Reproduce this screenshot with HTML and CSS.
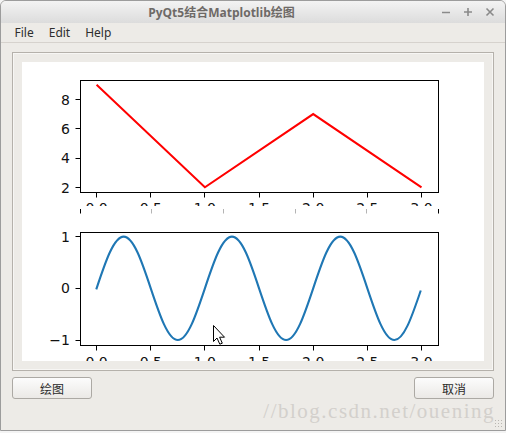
FILE: index.html
```html
<!DOCTYPE html>
<html lang="zh">

<head>
    <meta charset="UTF-8">
    <title>PyQt5结合Matplotlib绘图</title>
    <link rel="stylesheet" href="styles.css">
</head>

<body>

    <div class="ventana">
        <div class="barra-titulo">
            <div class="titulo">PyQt5结合Matplotlib绘图</div>
            <div class="controles">
                <span class="control">
                    <svg width="10" height="10" viewBox="0 0 10 10"><path d="M1 5.5H9" stroke="#8a8a8a" stroke-width="1.6"/></svg>
                </span>
                <span class="control">
                    <svg width="10" height="10" viewBox="0 0 10 10"><path d="M1 5H9M5 1V9" stroke="#8a8a8a" stroke-width="1.6"/></svg>
                </span>
                <span class="control">
                    <svg width="10" height="10" viewBox="0 0 10 10"><path d="M1.5 1.5L8.5 8.5M8.5 1.5L1.5 8.5" stroke="#8a8a8a" stroke-width="1.6"/></svg>
                </span>
            </div>
        </div>

        <div class="menu">
            <span class="menu-item">File</span>
            <span class="menu-item">Edit</span>
            <span class="menu-item">Help</span>
        </div>

        <div class="contenido">
            <div class="marco">
                <svg class="lienzo" width="462" height="299" viewBox="0 0 462 299">
                    <defs>
                        <clipPath id="recorte-etiquetas">
                            <rect x="0" y="131" width="462" height="13"/>
                        </clipPath>
                    </defs>

                    <!-- grafico de arriba -->
                    <polyline points="74.6,22.75 182.9,125.3 291.2,52.05 399.5,125.3" fill="none" stroke="#ff0000" stroke-width="2" stroke-linejoin="miter"/>
                    <rect x="58.5" y="18.5" width="358" height="112" fill="none" stroke="#000" stroke-width="1"/>
                    <g stroke="#000" stroke-width="1">
                        <path d="M53.5 37.5H58.5M53.5 66.5H58.5M53.5 96.5H58.5M53.5 125.5H58.5"/>
                        <path d="M74.5 130.5V135.5M128.5 130.5V135.5M182.5 130.5V135.5M237.5 130.5V135.5M291.5 130.5V135.5M345.5 130.5V135.5M399.5 130.5V135.5"/>
                    </g>
                    <g class="etiqueta" text-anchor="end">
                        <text x="48" y="42.5">8</text>
                        <text x="48" y="71.5">6</text>
                        <text x="48" y="101">4</text>
                        <text x="48" y="130.5">2</text>
                    </g>
                    <g class="etiqueta" text-anchor="middle" clip-path="url(#recorte-etiquetas)">
                        <text x="74.6" y="150.5">0.0</text>
                        <text x="128.8" y="150.5">0.5</text>
                        <text x="182.9" y="150.5">1.0</text>
                        <text x="237.1" y="150.5">1.5</text>
                        <text x="291.2" y="150.5">2.0</text>
                        <text x="345.4" y="150.5">2.5</text>
                        <text x="399.5" y="150.5">3.0</text>
                    </g>
                    <g stroke-width="1">
                        <path d="M58.5 147V151.5M416.5 147V151.5" stroke="#000"/>
                        <path d="M129.5 147V151.5M201.5 147V151.5M273.5 147V151.5M344.5 147V151.5" stroke="#b4b4b4"/>
                    </g>

                    <!-- grafico de abajo -->
                    <path d="M74.6 226.3
                             c 8.83 -26.49 17.28 -51.7 27.075 -51.7 c 9.795 0 18.245 25.21 27.075 51.7
                             c 8.83 26.49 17.28 51.7 27.075 51.7 c 9.795 0 18.245 -25.21 27.075 -51.7
                             c 8.83 -26.49 17.28 -51.7 27.075 -51.7 c 9.795 0 18.245 25.21 27.075 51.7
                             c 8.83 26.49 17.28 51.7 27.075 51.7 c 9.795 0 18.245 -25.21 27.075 -51.7
                             c 8.83 -26.49 17.28 -51.7 27.075 -51.7 c 9.795 0 18.245 25.21 27.075 51.7
                             c 8.83 26.49 17.28 51.7 27.075 51.7 c 9.795 0 18 -25.21 26 -48.5"
                          fill="none" stroke="#1f77b4" stroke-width="2.1" stroke-linecap="square"/>
                    <rect x="58.5" y="170.5" width="358" height="113" fill="none" stroke="#000" stroke-width="1"/>
                    <g stroke="#000" stroke-width="1">
                        <path d="M53.5 174.5H58.5M53.5 226.5H58.5M53.5 278.5H58.5"/>
                        <path d="M74.5 283.5V288.5M128.5 283.5V288.5M182.5 283.5V288.5M237.5 283.5V288.5M291.5 283.5V288.5M345.5 283.5V288.5M399.5 283.5V288.5"/>
                    </g>
                    <g class="etiqueta" text-anchor="end">
                        <text x="48" y="179.8">1</text>
                        <text x="48" y="231.4">0</text>
                        <text x="48" y="283.1">−1</text>
                    </g>
                    <g class="etiqueta" text-anchor="middle">
                        <text x="74.6" y="304.5">0.0</text>
                        <text x="128.8" y="304.5">0.5</text>
                        <text x="182.9" y="304.5">1.0</text>
                        <text x="237.1" y="304.5">1.5</text>
                        <text x="291.2" y="304.5">2.0</text>
                        <text x="345.4" y="304.5">2.5</text>
                        <text x="399.5" y="304.5">3.0</text>
                    </g>

                    <!-- puntero del raton -->
                    <path d="M191.5 263.5V279.5L195 276L197.8 282.2L200.3 281.2L197.6 275.2H202.5Z" fill="#fff" stroke="#000" stroke-width="1" stroke-linejoin="round"/>
                </svg>
            </div>

            <div class="botones">
                <button class="boton">绘图</button>
                <button class="boton">取消</button>
            </div>
        </div>

        <div class="marca-agua">//blog.csdn.net/ouening</div>
        <div class="agarre"></div>
    </div>

</body>

</html>
```

FILE: styles.css
```css
body {
    margin: 0;
    background-color: #f4f4f4;
    font-family: "Noto Sans", "Noto Sans CJK SC", sans-serif;
}

.ventana {
    position: relative;
    width: 504px;
    height: 429px;
    border: 1px solid #9c9c9c;
    border-radius: 6px 6px 0 0;
    background-color: #edebe7;
    display: flex;
    flex-direction: column;
    overflow: hidden;
}

.barra-titulo {
    height: 22px;
    display: flex;
    align-items: center;
    background: linear-gradient(#f3f3f3, #dcdcdc);
}

.titulo {
    flex: 1;
    padding-left: 7px;
    text-align: center;
    font-family: "Open Sans", "Noto Sans CJK SC", sans-serif;
    font-weight: bold;
    font-size: 12px;
    color: #6e6a67;
}

.controles {
    display: flex;
    padding-right: 4px;
}

.control {
    width: 22px;
    height: 22px;
    display: flex;
    align-items: center;
    justify-content: center;
}

.menu {
    height: 19px;
    display: flex;
    align-items: center;
    padding-left: 6px;
    border-bottom: 1px solid #d6d2cd;
    font-size: 12px;
    color: #2e2e2e;
}

.menu-item {
    padding: 0 7.5px;
}

.contenido {
    padding: 9px 11px 0 11px;
}

.marco {
    border: 1px solid #b5b1ab;
    padding: 9px;
    box-shadow: inset 0 0 0 1px #f7f6f4;
}

.lienzo {
    display: block;
    background-color: #fff;
}

.etiqueta text {
    font-family: "DejaVu Sans", sans-serif;
    font-size: 14px;
    fill: #111;
}

.botones {
    display: flex;
    justify-content: space-between;
    margin-top: 6px;
}

.boton {
    width: 80px;
    height: 22px;
    padding: 0;
    border: 1px solid #aca9a4;
    border-radius: 3px;
    background: linear-gradient(#fcfcfc, #ebe9e6);
    font-family: "Noto Sans CJK SC", sans-serif;
    font-size: 12px;
    color: #2a2a2a;
}

.marca-agua {
    position: absolute;
    right: 10px;
    bottom: 6px;
    font-family: "Liberation Serif", serif;
    font-size: 21px;
    letter-spacing: 1.5px;
    color: #d3d0cc;
}

.agarre {
    position: absolute;
    right: 2px;
    bottom: 2px;
    width: 9px;
    height: 9px;
    background-image: radial-gradient(#b9b6b1 0.8px, transparent 1px);
    background-size: 3px 3px;
}
```
